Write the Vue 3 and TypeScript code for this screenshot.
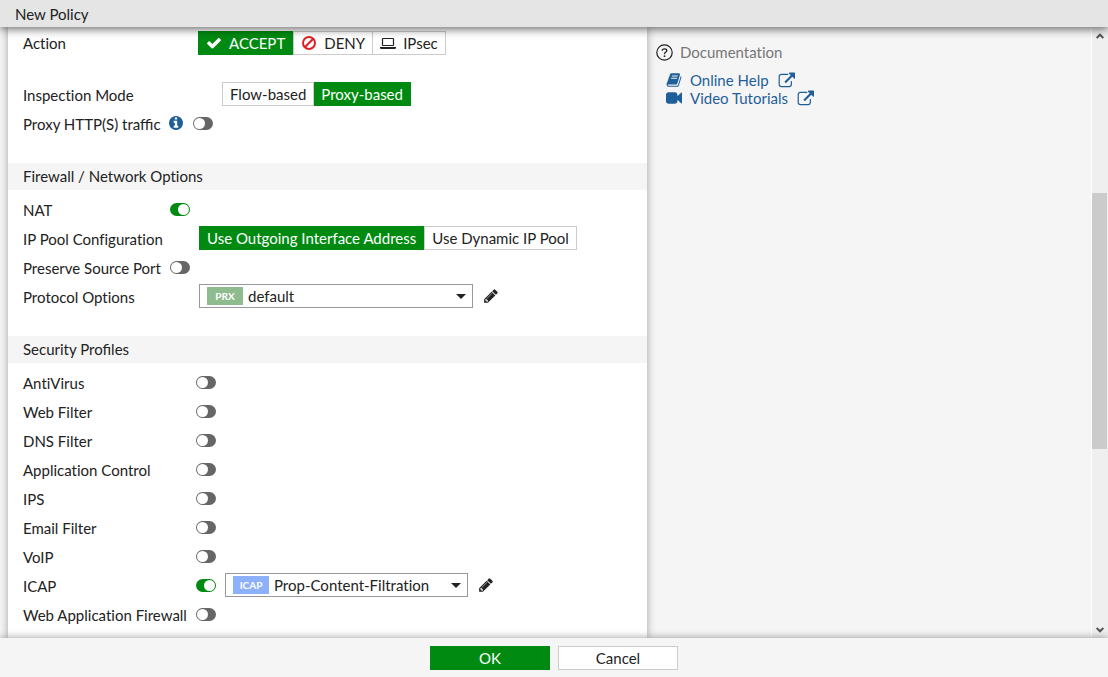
<script setup lang="ts">
import { ref, reactive } from 'vue'

interface Profile {
  id: string
  label: string
  on: boolean
  value?: string
}

const action = ref('ACCEPT')
const mode = ref('Proxy-based')
const modes = ['Flow-based', 'Proxy-based']
const pool = ref('Use Outgoing Interface Address')
const pools = ['Use Outgoing Interface Address', 'Use Dynamic IP Pool']
const proxyHttp = ref(false)
const nat = ref(true)
const preservePort = ref(false)
const protocol = ref('default')

const profiles = reactive<Profile[]>([
  { id: 'av', label: 'AntiVirus', on: false },
  { id: 'web', label: 'Web Filter', on: false },
  { id: 'dns', label: 'DNS Filter', on: false },
  { id: 'app', label: 'Application Control', on: false },
  { id: 'ips', label: 'IPS', on: false },
  { id: 'email', label: 'Email Filter', on: false },
  { id: 'voip', label: 'VoIP', on: false },
  { id: 'icap', label: 'ICAP', on: true, value: 'Prop-Content-Filtration' },
  { id: 'waf', label: 'Web Application Firewall', on: false },
])

const pencil =
  'M491 1536l91-91-235-235-91 91v107h128v128h107zm523-928q0-22-22-22-10 0-17 7l-542 542q-7 7-7 17 0 22 22 22 10 0 17-7l542-542q7-7 7-17zm-54-192l416 416-832 832h-416v-416zm683 96q0 53-37 90l-166 166-416-416 166-165q36-38 90-38 53 0 91 38l235 234q37 39 37 91z'
const external =
  'M1472 992v320q0 119-84.500 203.500t-203.500 84.500h-832q-119 0-203.500-84.500t-84.500-203.500v-832q0-119 84.500-203.500t203.500-84.500h704q14 0 23 9t9 23v64q0 14-9 23t-23 9h-704q-66 0-113 47t-47 113v832q0 66 47 113t113 47h832q66 0 113-47t47-113v-320q0-14 9-23t23-9h64q14 0 23 9t9 23zm320-864v512q0 26-19 45t-45 19-45-19l-176-176-652 652q-10 10-23 10t-23-10l-114-114q-10-10-10-23t10-23l652-652-176-176q-19-19-19-45t19-45 45-19h512q26 0 45 19t19 45z'
</script>

<template>
  <div class="page">
    <header class="title"><h1>New Policy</h1></header>

    <div class="body">
      <main class="panel">
        <section class="group action">
          <div class="row">
            <span id="action-label" class="label">Action</span>
            <div class="segments" role="group" aria-labelledby="action-label">
              <button type="button" :class="{ active: action === 'ACCEPT' }" :aria-pressed="action === 'ACCEPT'" @click="action = 'ACCEPT'">
                <svg class="glyph" viewBox="0 0 1792 1792" aria-hidden="true"><path fill="currentColor" d="M1671 566q0 40-28 68l-724 724-136 136q-28 28-68 28t-68-28l-136-136-362-362q-28-28-28-68t28-68l136-136q28-28 68-28t68 28l294 295 656-657q28-28 68-28t68 28l136 136q28 28 28 68z" /></svg>ACCEPT
              </button>
              <button type="button" :class="{ active: action === 'DENY' }" :aria-pressed="action === 'DENY'" @click="action = 'DENY'">
                <svg class="glyph deny" viewBox="0 0 16 16" aria-hidden="true"><g fill="none" stroke="currentColor" stroke-width="2"><circle cx="8" cy="8" r="6" /><path d="M3.800 12.200L12.200 3.800" /></g></svg>DENY
              </button>
              <button type="button" :class="{ active: action === 'IPsec' }" :aria-pressed="action === 'IPsec'" @click="action = 'IPsec'">
                <svg class="glyph" viewBox="0 0 16 16" aria-hidden="true"><rect x="2.500" y="3.500" width="11" height="7" rx="0.500" fill="none" stroke="currentColor" stroke-width="1.200" /><path fill="currentColor" d="M0 12h16v1q0 1-1.500 1h-13Q0 14 0 13z" /></svg>IPsec
              </button>
            </div>
          </div>
        </section>

        <section class="group inspection">
          <div class="row">
            <span id="mode-label" class="label">Inspection Mode</span>
            <div class="segments" role="group" aria-labelledby="mode-label">
              <button v-for="m in modes" :key="m" type="button" :class="{ active: mode === m }" :aria-pressed="mode === m" @click="mode = m">{{ m }}</button>
            </div>
          </div>
          <div class="row">
            <label class="proxy joined" for="proxy-http">Proxy HTTP(S) traffic</label>
            <svg class="info" viewBox="128 128 1536 1536" aria-hidden="true"><path fill="currentColor" d="M1152 1376v-160q0-14-9-23t-23-9h-96v-512q0-14-9-23t-23-9h-320q-14 0-23 9t-9 23v160q0 14 9 23t23 9h96v320h-96q-14 0-23 9t-9 23v160q0 14 9 23t23 9h448q14 0 23-9t9-23zm-128-896v-160q0-14-9-23t-23-9h-192q-14 0-23 9t-9 23v160q0 14 9 23t23 9h192q14 0 23-9t9-23zm640 416q0 209-103 385.500t-279.500 279.500-385.500 103-385.500-103-279.500-279.500-103-385.500 103-385.500 279.500-279.500 385.500-103 385.500 103 279.500 279.500 103 385.500z" /></svg>
            <input id="proxy-http" v-model="proxyHttp" class="toggle" type="checkbox" />
          </div>
        </section>

        <h2>Firewall / Network Options</h2>
        <section class="group network">
          <div class="row">
            <label class="label" for="nat">NAT</label>
            <input id="nat" v-model="nat" class="toggle" type="checkbox" />
          </div>
          <div class="row">
            <span id="pool-label" class="label wide">IP Pool Configuration</span>
            <div class="segments" role="group" aria-labelledby="pool-label">
              <button v-for="p in pools" :key="p" type="button" :class="{ active: pool === p }" :aria-pressed="pool === p" @click="pool = p">{{ p }}</button>
            </div>
          </div>
          <div class="row">
            <label class="label" for="preserve">Preserve Source Port</label>
            <input id="preserve" v-model="preservePort" class="toggle" type="checkbox" />
          </div>
          <div class="row">
            <label class="label wide" for="protocol">Protocol Options</label>
            <div class="picker">
              <span class="badge prx">PRX</span>
              <select id="protocol" v-model="protocol"><option>default</option></select>
              <svg class="caret" viewBox="0 0 10 5" aria-hidden="true"><path fill="currentColor" d="M0 0h10L5 5z" /></svg>
            </div>
            <button type="button" class="edit" aria-label="Edit protocol options"><svg viewBox="0 0 1792 1792" aria-hidden="true"><path fill="currentColor" :d="pencil" /></svg></button>
          </div>
        </section>

        <h2 class="joined">Security Profiles</h2>
        <section class="group security">
          <div v-for="p in profiles" :key="p.id" class="row">
            <label class="label" :for="p.id">{{ p.label }}</label>
            <input :id="p.id" v-model="p.on" class="toggle" type="checkbox" />
            <template v-if="p.value && p.on">
              <div class="picker narrow">
                <span class="badge icap">ICAP</span>
                <select v-model="p.value" aria-label="ICAP profile"><option>Prop-Content-Filtration</option></select>
                <svg class="caret" viewBox="0 0 10 5" aria-hidden="true"><path fill="currentColor" d="M0 0h10L5 5z" /></svg>
              </div>
              <button type="button" class="edit" aria-label="Edit ICAP profile"><svg viewBox="0 0 1792 1792" aria-hidden="true"><path fill="currentColor" :d="pencil" /></svg></button>
            </template>
          </div>
        </section>
      </main>

      <aside class="docs">
        <h3>
          <svg viewBox="0 0 17 17" aria-hidden="true"><g fill="none" stroke="currentColor"><circle cx="8.500" cy="8.500" r="7.700" stroke-width="1.200" /><path stroke-width="1.300" d="M6.200 6.800Q6.300 4.800 8.500 4.800T10.800 6.600Q10.800 7.600 9.600 8.300Q8.500 9 8.500 10.300" /></g><circle cx="8.500" cy="12.200" r="0.900" fill="currentColor" /></svg>
          Documentation
        </h3>
        <ul>
          <li>
            <a href="#help">
              <svg class="lead" viewBox="0 0 1792 1792" aria-hidden="true"><path fill="currentColor" d="M1703 478q40 57 18 129l-275 906q-19 64-76.500 107.500t-122.500 43.500h-923q-77 0-148.500-53.500t-99.500-131.500q-24-67-2-127 0-4 3-27t4-37q1-8-3-21.500t-3-19.500q2-11 8-21t16.500-23.500 16.500-23.500q23-38 45-91.500t30-91.500q3-10 .5-30t-.5-28q3-11 17-28t17-23q21-36 42-92t25-90q1-9-2.500-32t.5-28q4-13 22-30.500t22-22.500q19-26 42.500-84.500t27.500-96.500q1-8-3-25.500t-2-26.500q2-8 9-18t18-23 17-21q8-12 16.500-30.500t15-35 16-36 19.500-32 26.500-23.500 36-11.500 47.500 5.500l-1 3q38-9 51-9h761q74 0 114 56t18 130l-274 906q-36 119-71.500 153.500t-128.500 34.500h-869q-27 0-38 15-11 16-1 43 24 70 144 70h923q29 0 56-15.500t35-41.500l300-987q7-22 5-57 38 15 59 43zm-1064 2q-4 13 2 22.500t20 9.500h608q13 0 25.500-9.500t16.500-22.500l21-64q4-13-2-22.500t-20-9.500h-608q-13 0-25.500 9.500t-16.500 22.500zm-83 256q-4 13 2 22.500t20 9.500h608q13 0 25.500-9.500t16.500-22.500l21-64q4-13-2-22.500t-20-9.500h-608q-13 0-25.500 9.500t-16.500 22.500z" /></svg>
              <span>Online Help</span>
              <svg class="out" viewBox="0 0 1792 1792" aria-hidden="true"><path fill="currentColor" :d="external" /></svg>
            </a>
          </li>
          <li>
            <a href="#videos">
              <svg class="lead" viewBox="0 0 1792 1792" aria-hidden="true"><path fill="currentColor" d="M1792 352v1088q0 42-39 59-13 5-25 5-27 0-45-19l-403-403v166q0 119-84.500 203.500t-203.500 84.500h-704q-119 0-203.500-84.500t-84.500-203.500v-704q0-119 84.500-203.500t203.500-84.500h704q119 0 203.500 84.500t84.500 203.500v165l403-402q18-19 45-19 12 0 25 5 39 17 39 59z" /></svg>
              <span>Video Tutorials</span>
              <svg class="out" viewBox="0 0 1792 1792" aria-hidden="true"><path fill="currentColor" :d="external" /></svg>
            </a>
          </li>
        </ul>
      </aside>

      <div class="scrollbar" aria-hidden="true">
        <svg viewBox="0 0 8 6"><path d="M0.700 5L4 1.700L7.300 5" /></svg>
        <div class="track"><div class="thumb"></div></div>
        <svg viewBox="0 0 8 6"><path d="M0.700 1L4 4.300L7.300 1" /></svg>
      </div>
    </div>

    <footer class="actions">
      <button type="button" class="ok">OK</button>
      <button type="button" class="cancel">Cancel</button>
    </footer>
  </div>
</template>

<style>
body {
  margin: 0;
}
</style>

<style scoped>
.page {
  display: flex;
  flex-direction: column;
  height: 100vh;
  overflow: hidden;
  background: #f5f5f5;
  color: #222;
  font: 15px/18px Lato, sans-serif;
  font-variant-ligatures: none;
}
.page * {
  box-sizing: border-box;
}
button,
select {
  font: inherit;
  font-variant-ligatures: none;
  color: inherit;
}
h1,
h2,
h3,
ul {
  margin: 0;
  padding: 0;
  font: inherit;
  font-variant-ligatures: none;
  list-style: none;
}
.page .joined {
  font-variant-ligatures: normal;
}
.title {
  z-index: 2;
  flex: none;
  height: 27px;
  padding: 5px 15px 0;
  background: #e5e5e5;
  box-shadow: 0 2px 10px rgba(0, 0, 0, 0.6);
}
.body {
  display: flex;
  flex: 1;
  min-height: 0;
}
.panel {
  flex: 639 1 0;
  margin-left: 8px;
  padding-top: 2px;
  background: #fff;
  box-shadow: 0 0 8px rgba(0, 0, 0, 0.35);
  z-index: 1;
}
.group {
  padding: 0 14px 0 15px;
}
.action {
  margin-bottom: 23px;
}
.inspection,
.network {
  margin-bottom: 24px;
}
.row {
  display: flex;
  align-items: center;
  height: 29px;
  padding-bottom: 3px;
}
.action .row {
  padding-bottom: 1px;
}
h2 {
  height: 27px;
  margin-bottom: 6px;
  padding: 4px 15px 0;
  background: #f5f5f5;
}
.label {
  flex: none;
  padding-top: 1px;
}
.action .label {
  width: 175px;
  padding: 0 0 1px;
}
.inspection .label {
  width: 199px;
}
.network .label {
  width: 147px;
}
.network .wide {
  width: 176px;
}
.security .label {
  width: 173px;
}
.proxy {
  padding-top: 1px;
}
.info {
  width: 14px;
  height: 14px;
  margin: 0 10px 0 8px;
  color: #1f5f99;
}
.segments {
  display: flex;
}
.segments button {
  display: flex;
  align-items: center;
  height: 24px;
  padding: 0 7px;
  border: 1px solid #ccc;
  background: #fff;
  white-space: nowrap;
}
.segments button + button {
  border-left-width: 0;
}
.segments button.active + button {
  border-left-width: 1px;
}
.segments button.active {
  border-color: #008a11;
  background: #008a11;
  color: #fff;
}
.glyph {
  width: 16px;
  height: 16px;
  margin-right: 7px;
}
.deny {
  color: #e02020;
}
.toggle {
  appearance: none;
  display: flex;
  flex: none;
  width: 20px;
  height: 13px;
  margin: 0;
  padding: 1px;
  border-radius: 7px;
  background: #666;
}
.toggle::before {
  content: '';
  width: 11px;
  height: 11px;
  border-radius: 50%;
  background: #fff;
}
.toggle:checked {
  justify-content: flex-end;
  background: #008a11;
}
.picker {
  position: relative;
  display: flex;
  align-items: center;
  width: 274px;
  height: 24px;
  padding-left: 7px;
  border: 1px solid #999;
  background: #fff;
}
.narrow {
  width: 243px;
  margin-left: 9px;
}
.badge {
  flex: none;
  width: 36px;
  height: 18px;
  color: #fff;
  font-size: 10px;
  font-weight: 700;
  text-align: center;
}
.prx {
  background: #8fbc8f;
}
.icap {
  background: #8cb0fa;
}
.picker select {
  appearance: none;
  flex: 1;
  min-width: 0;
  height: 22px;
  padding: 0 24px 0 5px;
  border: 0;
  background: transparent;
}
.caret {
  position: absolute;
  right: 6px;
  top: 9px;
  width: 10px;
  height: 5px;
  pointer-events: none;
}
.edit {
  display: flex;
  margin-left: 10px;
  padding: 0;
  border: 0;
  background: none;
}
.edit svg {
  width: 16px;
  height: 16px;
}
.docs {
  flex: 426 1 0;
  padding: 16px 9px;
}
.docs h3 {
  display: flex;
  align-items: center;
  gap: 7px;
  margin-bottom: 10px;
  color: #777;
}
.docs h3 svg {
  width: 17px;
  height: 17px;
  color: #222;
}
.docs ul {
  padding-left: 10px;
}
.docs li {
  display: flex;
}
.docs a {
  display: flex;
  align-items: center;
  color: #1f5f99;
  text-decoration: none;
}
.lead {
  width: 16px;
  height: 16px;
  margin-right: 8px;
}
.out {
  width: 17px;
  height: 17px;
  margin-left: 9px;
}
.scrollbar {
  display: flex;
  flex: none;
  flex-direction: column;
  align-items: center;
  width: 17px;
  padding: 6px 0 5px;
  border-left: 1px solid #fff;
  background: #efefef;
}
.scrollbar svg {
  flex: none;
  width: 8px;
  height: 6px;
  margin-right: 1px;
  fill: none;
  stroke: #555;
  stroke-width: 2;
}
.track {
  display: flow-root;
  flex: 1;
  align-self: stretch;
  padding-right: 1px;
}
.thumb {
  height: 43.5%;
  margin-top: 154px;
  background: #cbcbcb;
}
.actions {
  z-index: 2;
  display: flex;
  flex: none;
  justify-content: center;
  gap: 8px;
  height: 39px;
  padding-top: 8px;
  background: #f5f5f5;
  box-shadow: 0 0 8px rgba(0, 0, 0, 0.4);
}
.actions button {
  width: 120px;
  height: 24px;
  padding: 0;
  border: 1px solid #ccc;
  background: #fff;
}
.actions .ok {
  border-color: #008a11;
  background: #008a11;
  color: #fff;
}
</style>
